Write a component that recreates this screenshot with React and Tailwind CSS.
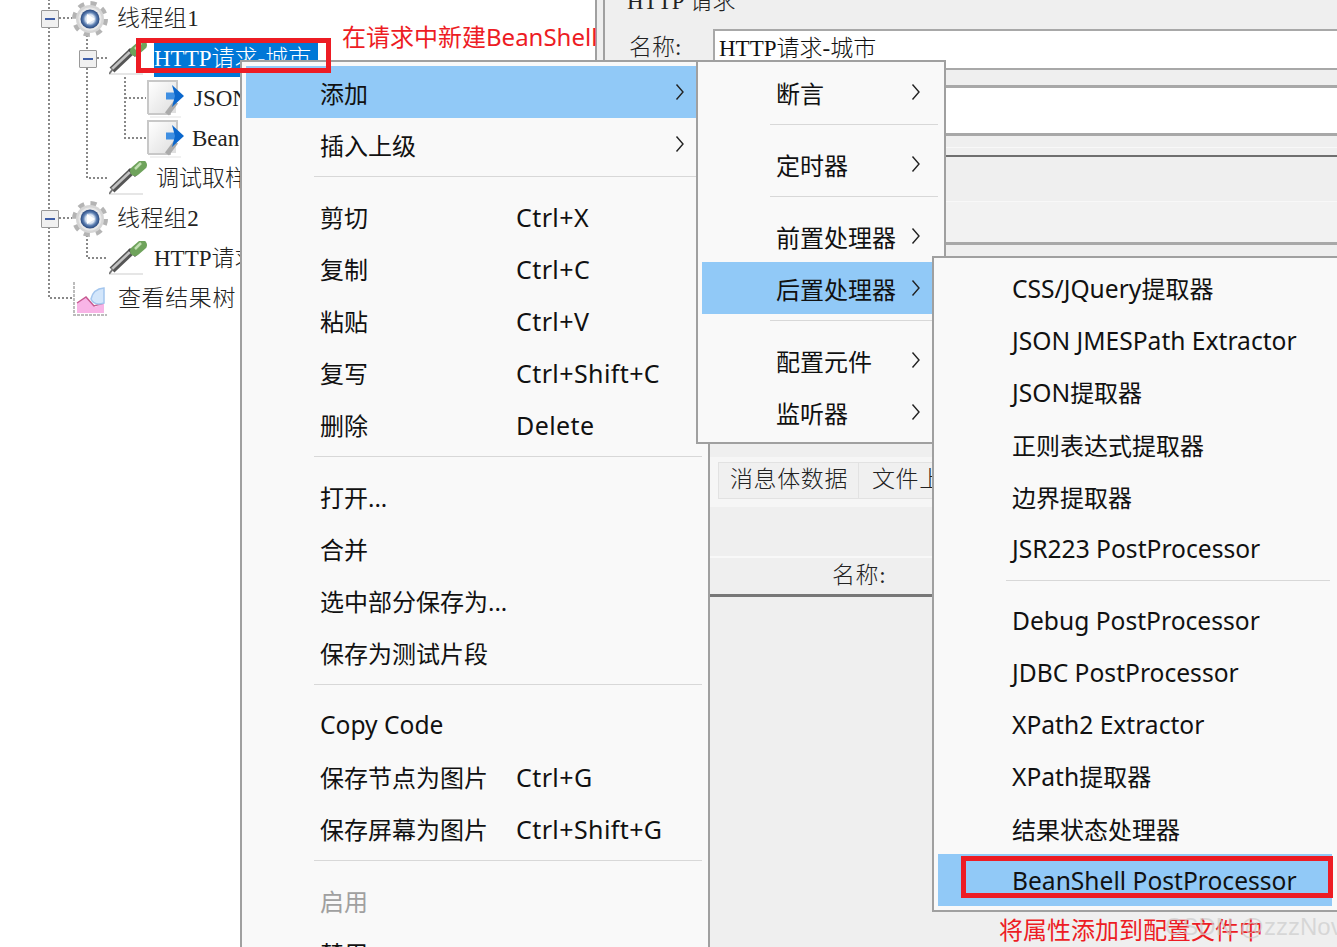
import React from "react"

const menuFont = "font-['Noto_Sans','Noto_Sans_CJK_SC',sans-serif]"
const treeFont = "font-['Liberation_Serif','Noto_Sans_CJK_SC',serif]"

const Chevron = () => (
  <svg width="10" height="18" viewBox="0 0 10 18" fill="none" className="shrink-0">
    <path d="M1.5 1.5 L8 9 L1.5 16.5" stroke="#222" strokeWidth="1.4" />
  </svg>
)

// latin runs are a bit wider in the picture than the cjk font size gives
const Label = ({ text }) =>
  text.split(/([A-Za-z0-9 /.+]+)/).map((part, i) =>
    /[A-Za-z0-9]/.test(part)
      ? <span key={i} className="text-[24.6px]">{part}</span>
      : <span key={i}>{part}</span>
  )

const Item = ({ label, shortcut, arrow, active, disabled }) => (
  <div className={`relative flex items-center h-[52px] pl-[74px] pt-[3px] text-[24px] whitespace-nowrap ${active ? "bg-[#91c9f7]" : ""} ${disabled ? "text-[#a0a0a0]" : "text-[#111]"}`}>
    <span className={shortcut ? "w-[196px]" : ""}><Label text={label} /></span>
    {shortcut && <span className="text-[25px] tracking-[0.4px]">{shortcut}</span>}
    {arrow && (
      <span className="absolute right-[19px] top-[17px]">
        <Chevron />
      </span>
    )}
  </div>
)

const Sep = () => (
  <div className="h-5 pt-[6px] ml-[68px] mr-[2px]">
    <div className="h-px bg-[#d8d8d8]" />
  </div>
)

const Gear = ({ id }) => (
  <svg width="36" height="36" viewBox="0 0 36 36" className="shrink-0">
    <defs>
      <radialGradient id={id} cx="0.5" cy="0.5" r="0.5">
        <stop offset="0.45" stopColor="#dfe8f4" />
        <stop offset="0.7" stopColor="#5c7fb2" />
        <stop offset="1" stopColor="#27467c" />
      </radialGradient>
    </defs>
    <circle cx="18" cy="18" r="15.5" fill="none" stroke="#b4b4b4" strokeWidth="5" strokeDasharray="6 6.17" />
    <circle cx="18" cy="18" r="14" fill="#d6d6d6" />
    <circle cx="18" cy="18" r="11.5" fill="#e8e8e8" />
    <circle cx="18" cy="18" r="9.5" fill={`url(#${id})`} />
    <path d="M15 13 L23 18 L15 23 Z" fill="#ffffff" />
  </svg>
)

const Dropper = () => (
  <svg width="38" height="36" viewBox="0 0 38 36" className="shrink-0">
    <path d="M1 33 H34" stroke="#e6e6e6" strokeWidth="2" />
    <path d="M3 29 L22 11" stroke="#555" strokeWidth="7" />
    <path d="M3 28 L21 11" stroke="#c4c4c4" strokeWidth="2.5" />
    <path d="M0 33 L4 28" stroke="#777" strokeWidth="2" />
    <path d="M20 8 L27 15" stroke="#4a4a4a" strokeWidth="3" />
    <path d="M26 10 L33 4" stroke="#6fa35c" strokeWidth="10" strokeLinecap="round" />
    <path d="M26 8 L32 2" stroke="#c2dfb2" strokeWidth="2.5" />
  </svg>
)

const DocArrow = () => (
  <svg width="38" height="38" viewBox="0 0 38 38" className="shrink-0">
    <defs>
      <linearGradient id="docFill" x1="0" y1="0" x2="1" y2="1">
        <stop offset="0" stopColor="#ffffff" />
        <stop offset="1" stopColor="#dedede" />
      </linearGradient>
    </defs>
    <path d="M1 34 V1 H30 V12" fill="none" stroke="#c8c8c8" strokeWidth="2" />
    <path d="M2 2 H29 V33 H2 Z" fill="url(#docFill)" />
    <path d="M1 34 H24" stroke="#c8c8c8" strokeWidth="2" />
    <path d="M3 37 H34" stroke="#ececec" strokeWidth="1.5" />
    <path d="M20 34 L29 22" stroke="#aaaaaa" strokeWidth="5" />
    <path d="M19 16 H31" stroke="#3f8fe2" strokeWidth="7" />
    <path d="M25 5 L37 16 L25 27 L28 16 Z" fill="#0b67cc" />
  </svg>
)

const ChartIcon = () => (
  <svg width="36" height="36" viewBox="0 0 36 36" className="shrink-0">
    <path d="M1 1 V34 H34" fill="none" stroke="#bcbcbc" strokeWidth="2" strokeDasharray="3 1" />
    <path d="M4 32 V22 L13 16 L22 26 L31 22 V32 Z" fill="#f8b4e6" />
    <path d="M4 22 L13 16 L21 25 L31 22" fill="none" stroke="#c75a90" strokeWidth="1.5" />
    <path d="M18 18 Q20 8 31 7 V22 Q21 25 18 18 Z" fill="#d3e6fb" stroke="#a4c6ee" strokeWidth="1.5" />
  </svg>
)

const Expander = () => (
  <div className="w-[18px] h-[18px] shrink-0 flex items-center justify-center border border-[#999] bg-[#f0f0f0] rounded-[1px]">
    <div className="w-[10px] h-[2px] bg-[#3f5fa8]" />
  </div>
)

const TreeRow = ({ className, children }) => (
  <div className={`relative flex items-center h-10 text-[23px] font-light text-[#222] whitespace-nowrap ${className}`}>
    {children}
  </div>
)

const TreeLines = () => (
  <svg width="160" height="310" className="absolute left-0 top-0" fill="none" stroke="#888" strokeWidth="2" strokeDasharray="2 2">
    <path d="M49 0 V299 H72" />
    <path d="M59 19 H72" />
    <path d="M59 219 H72" />
    <path d="M87 36 V51" />
    <path d="M97 59 H108" />
    <path d="M87 69 V179 H108" />
    <path d="M125 78 V139 H146" />
    <path d="M125 99 H146" />
    <path d="M87 236 V259 H108" />
  </svg>
)

const Tree = () => (
  <div className={`relative w-[597px] shrink-0 bg-white border-r-2 border-[#a0a0a0] -mt-px ${treeFont}`}>
    <TreeLines />
    <TreeRow className="pl-[41px]">
      <Expander />
      <span className="ml-[13px]"><Gear id="gearA" /></span>
      <span className="ml-[9px] tracking-[0.4px]">线程组1</span>
    </TreeRow>
    <TreeRow className="pl-[79px]">
      <Expander />
      <span className="ml-3"><Dropper /></span>
      <span className="ml-[7px] bg-[#0078d7] text-white w-[164px] h-9 leading-9">HTTP请求-城市</span>
    </TreeRow>
    <TreeRow className="pl-[147px]">
      <DocArrow />
      <span className="ml-[9px]">JSON</span>
    </TreeRow>
    <TreeRow className="pl-[147px]">
      <DocArrow />
      <span className="ml-[7px]">Bean</span>
    </TreeRow>
    <TreeRow className="pl-[109px]">
      <Dropper />
      <span className="ml-[9px]">调试取样器</span>
    </TreeRow>
    <TreeRow className="pl-[41px]">
      <Expander />
      <span className="ml-[13px]"><Gear id="gearB" /></span>
      <span className="ml-[9px] tracking-[0.4px]">线程组2</span>
    </TreeRow>
    <TreeRow className="pl-[109px]">
      <Dropper />
      <span className="ml-[7px]">HTTP请求</span>
    </TreeRow>
    <TreeRow className="pl-[73px]">
      <ChartIcon />
      <span className="ml-[9px] tracking-[0.6px]">查看结果树</span>
    </TreeRow>
  </div>
)

const RightPanel = () => (
  <div className={`flex-1 flex flex-col ml-[6px] border-l-2 border-[#a0a0a0] bg-[#efefef] text-[23px] font-light text-[#222] ${treeFont}`}>
    <div className="h-[29px] shrink-0 pl-[22px]">
      <div className="-mt-[9px] leading-[22px]">HTTP 请求</div>
    </div>
    <div className="flex items-center h-[41px] shrink-0">
      <span className="w-[108px] pl-[24px] pb-[2px]">名称:</span>
      <div className="flex-1 h-full border-2 border-[#a8a8a8] border-r-0 bg-white pl-1 leading-[36px] text-[#111]">HTTP请求-城市</div>
    </div>
    <div className="h-[15px] shrink-0" />
    <div className="h-[51px] shrink-0 ml-[108px] border-y-[3px] border-[#a8a8a8] bg-white" />
    <div className="h-[21px] shrink-0 border-b-2 border-[#6f6f6f]">
      <div className="h-[12px] border-b border-[#f8f8f8]" />
    </div>
    <div className="h-[45px] shrink-0 border-b border-[#f8f8f8]" />
    <div className="h-[43px] shrink-0 bg-[#f2f2f2] border-b-[3px] border-[#a8a8a8]" />
    <div className="h-[212px] shrink-0" />
    <div className="h-[50px] shrink-0 bg-[#f6f6f6] pt-[5px] pl-[113px]">
      <div className="flex items-center h-[37px] border border-[#e2e2e2] border-r-0 bg-[#f0f0f0] whitespace-nowrap">
        <span className="pl-[11px] w-[139px] tracking-[0.6px]">消息体数据</span>
        <span className="flex items-center h-full border-l border-[#e2e2e2] pl-[13px] tracking-[0.6px]">文件上传</span>
      </div>
    </div>
    <div className="h-[51px] shrink-0 border-b-2 border-[#f8f8f8]" />
    <div className="h-[39px] shrink-0 border-b-[3px] border-[#777] flex items-center pl-[227px] tracking-[0.6px]">名称:</div>
  </div>
)

export default function App() {
  return (
    <div className="relative w-[1337px] h-[947px] overflow-hidden flex bg-[#efefef]">
      <Tree />
      <RightPanel />

      {/* context menu */}
      <div className={`absolute left-[240px] top-[60px] w-[470px] h-[900px] bg-[#f9f9f9] border-2 border-[#a0a0a0] p-1 ${menuFont}`}>
        <Item label="添加" arrow active />
        <Item label="插入上级" arrow />
        <Sep />
        <Item label="剪切" shortcut="Ctrl+X" />
        <Item label="复制" shortcut="Ctrl+C" />
        <Item label="粘贴" shortcut="Ctrl+V" />
        <Item label="复写" shortcut="Ctrl+Shift+C" />
        <Item label="删除" shortcut="Delete" />
        <Sep />
        <Item label="打开..." />
        <Item label="合并" />
        <Item label="选中部分保存为..." />
        <Item label="保存为测试片段" />
        <Sep />
        <Item label="Copy Code" />
        <Item label="保存节点为图片" shortcut="Ctrl+G" />
        <Item label="保存屏幕为图片" shortcut="Ctrl+Shift+G" />
        <Sep />
        <Item label="启用" disabled />
        <Item label="禁用" />
      </div>

      {/* first submenu */}
      <div className={`absolute left-[696px] top-[60px] w-[250px] bg-[#f9f9f9] border-2 border-[#a0a0a0] p-1 ${menuFont}`}>
        <Item label="断言" arrow />
        <Sep />
        <Item label="定时器" arrow />
        <Sep />
        <Item label="前置处理器" arrow />
        <Item label="后置处理器" arrow active />
        <Sep />
        <Item label="配置元件" arrow />
        <Item label="监听器" arrow />
      </div>

      {/* second submenu */}
      <div className={`absolute left-[932px] top-[256px] w-[408px] bg-[#f9f9f9] border-2 border-[#a0a0a0] p-1 pr-[6px] ${menuFont}`}>
        <Item label="CSS/JQuery提取器" />
        <Item label="JSON JMESPath Extractor" />
        <Item label="JSON提取器" />
        <Item label="正则表达式提取器" />
        <Item label="边界提取器" />
        <Item label="JSR223 PostProcessor" />
        <Sep />
        <Item label="Debug PostProcessor" />
        <Item label="JDBC PostProcessor" />
        <Item label="XPath2 Extractor" />
        <Item label="XPath提取器" />
        <Item label="结果状态处理器" />
        <Item label="BeanShell PostProcessor" active />
      </div>

      {/* red annotations */}
      <div className="absolute left-[136px] top-[38px] w-[195px] h-[35px] border-[5px] border-[#ed1c24]" />
      <div className="absolute left-[961px] top-[856px] w-[372px] h-[42px] border-[5px] border-[#ed1c24]" />
      <div className={`absolute left-[342px] top-[19px] text-[24px] text-[#ed1c24] whitespace-nowrap ${menuFont}`}>在请求中新建BeanShell</div>
      <div className={`absolute left-[999px] top-[912px] text-[24px] text-[#ed1c24] whitespace-nowrap ${menuFont}`}>将属性添加到配置文件中</div>
      <div className="absolute left-[1165px] top-[909px] text-[24px] text-[#cccccc]/70 whitespace-nowrap font-['Liberation_Sans',sans-serif]">CSDN @zzzNov</div>
    </div>
  )
}
